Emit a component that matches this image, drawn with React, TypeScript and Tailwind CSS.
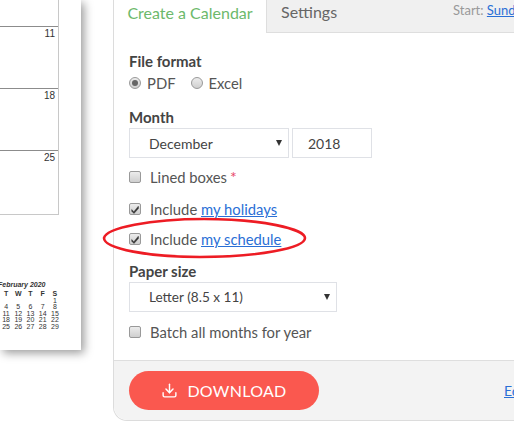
import React from "react";
import { Download } from "lucide-react";

const Check = ({ checked }: { checked?: boolean }) => (
  <span className="flex h-[12px] w-[12px] shrink-0 items-center justify-center rounded-[2px] border border-[#999] bg-gradient-to-b from-[#ececec] to-[#cfcfcf]">
    {checked && (
      <svg viewBox="0 0 12 12" className="h-[11px] w-[11px]">
        <path d="M2 6 L4.6 8.6 L10 2 L10.4 4.6 L4.8 10.8 L2 8 Z" fill="#333" stroke="#333" strokeWidth="0.5" />
      </svg>
    )}
  </span>
);

const Radio = ({ checked }: { checked?: boolean }) => (
  <span className="flex h-[12px] w-[12px] shrink-0 items-center justify-center rounded-full border border-[#999] bg-gradient-to-b from-[#ececec] to-[#cfcfcf]">
    {checked && <span className="h-[6px] w-[6px] rounded-full bg-[#666]" />}
  </span>
);

const Caret = () => (
  <svg viewBox="0 0 6 6" className="h-[6px] w-[6px]">
    <path d="M0 0 H6 L3 6 Z" fill="#333" />
  </svg>
);

const CheckRow = ({ checked, className, children }: { checked?: boolean; className: string; children: React.ReactNode }) => (
  <div className={`flex h-[20px] items-center gap-[9px] text-[14.8px] text-[#555] ${className}`}>
    <Check checked={checked} />
    <span>{children}</span>
  </div>
);

const Week = ({ top, day }: { top: number; day: string }) => (
  <div className="flex justify-end border-t border-[#8c8c8c] pr-[3px] pt-[1px] font-['Liberation_Sans',sans-serif] text-[10px] leading-[11px] text-[#333]" style={{ height: top }}>
    {day}
  </div>
);

const mini = ["T", "W", "T", "F", "S", "", "", "", "", "1", "4", "5", "6", "7", "8", "11", "12", "13", "14", "15", "18", "19", "20", "21", "22", "25", "26", "27", "28", "29"];

const A = ({ children }: { children: React.ReactNode }) => <a className="text-[#2a6fd6] underline">{children}</a>;

export default function App() {
  return (
    <div className="relative flex h-[426px] w-[514px] overflow-hidden bg-white font-['Lato',sans-serif]">
      <div className="flex h-[350px] w-[81px] shrink-0 flex-col bg-white shadow-[3px_3px_9px_rgba(0,0,0,0.4)]">
        <div className="flex h-[215px] w-[59px] flex-col border-r border-b border-[#c8c8c8] pt-[26px]">
          <Week top={62} day="11" />
          <Week top={62} day="18" />
          <Week top={64} day="25" />
        </div>
        <div className="mt-[66px] -ml-[2px] w-[63px] font-['Liberation_Sans',sans-serif] text-[#333]">
          <div className="text-[7px] leading-[8px] font-bold italic">February 2020</div>
          <div className="mt-[2px] ml-[2px] grid grid-cols-5 text-center text-[7px] leading-[6.6px]">
            {mini.map((d, i) => (
              <span key={i} className={i < 5 ? "font-bold" : ""}>{d}</span>
            ))}
          </div>
        </div>
      </div>

      <div className="ml-[32px] flex h-[421px] w-[401px] shrink-0 flex-col rounded-bl-[14px] border-b border-l border-[#dcdcdc] bg-white">
        <div className="flex h-[33px] shrink-0 border-b border-[#dedede] bg-[#f0f0f0]">
          <div className="-mb-px flex w-[153px] items-center justify-center border-r border-[#dedede] bg-white pb-[8px] text-[16px] text-[#6cb96b]">Create a Calendar</div>
          <div className="ml-[14px] text-[16px] leading-[24px] text-[#666]">Settings</div>
          <div className="ml-auto w-[61px] overflow-hidden whitespace-nowrap pt-[2px] text-[13px] leading-[16px] text-[#999]">
            Start: <a className="text-[#2a6fd6] underline">Sunday</a>
          </div>
        </div>

        <div className="flex flex-1 flex-col pl-[15px]">
          <div className="mt-[18px] text-[15px] leading-[20px] font-bold text-[#444]">File format</div>
          <div className="mt-[2px] flex h-[20px] items-center text-[14.8px] text-[#555]">
            <Radio checked />
            <span className="ml-[6px]">PDF</span>
            <span className="ml-[15px]"><Radio /></span>
            <span className="ml-[6px]">Excel</span>
          </div>
          <div className="mt-[14px] text-[15px] leading-[20px] font-bold text-[#444]">Month</div>
          <div className="mt-[1px] flex gap-[3px] text-[14px] text-[#444]">
            <div className="flex h-[30px] w-[160px] items-center justify-between border border-[#dfe1e6] pr-[6px] pl-[19px]">
              December <Caret />
            </div>
            <div className="flex h-[30px] w-[80px] items-center border border-[#dfe1e6] pl-[15px]">2018</div>
          </div>
          <CheckRow className="mt-[9px]">
            Lined boxes<span className="ml-[3px] text-[16px] text-[#e8476a]">*</span>
          </CheckRow>
          <CheckRow checked className="mt-[12px]">
            Include <A>my holidays</A>
          </CheckRow>
          <CheckRow checked className="mt-[10px]">
            Include <A>my schedule</A>
          </CheckRow>
          <div className="mt-[12px] text-[15px] leading-[20px] font-bold text-[#444]">Paper size</div>
          <div className="mt-[1px] flex h-[30px] w-[208px] items-center justify-between border border-[#dfe1e6] pr-[6px] pl-[19px] text-[13.6px] text-[#444]">
            Letter (8.5 x 11) <Caret />
          </div>
          <CheckRow className="mt-[10px]">Batch all months for year</CheckRow>
        </div>

        <div className="flex h-[60px] shrink-0 items-center justify-between overflow-hidden rounded-bl-[14px] border-t border-[#dedede] bg-[#f3f3f3] pl-[15px]">
          <div className="flex h-[39px] w-[190px] items-center justify-center gap-[9px] rounded-full bg-[#fa584f] text-[16px] tracking-[0.3px] text-white">
            <Download size={17} strokeWidth={2} />
            DOWNLOAD
          </div>
          <div className="w-[10px] overflow-hidden text-[14px] text-[#2a6fd6] underline">Edit</div>
        </div>
      </div>

      <svg viewBox="0 0 514 426" className="pointer-events-none absolute inset-0 h-[426px] w-[514px]">
        <path d="M104 238 C106 228 150 219 204 219 C262 219 305 229 305 238 C305 248 258 257 200 257 C150 257 104 249 104 238 Z" fill="none" stroke="#ed1c24" strokeWidth="2.6" />
      </svg>
    </div>
  );
}
